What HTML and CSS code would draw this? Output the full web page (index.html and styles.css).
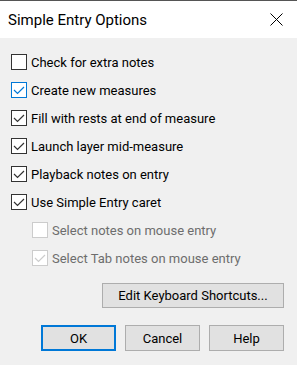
FILE: index.html
```html
<!DOCTYPE html>
<html lang="en">
<head>
  <meta charset="UTF-8" />
  <title>Simple Entry Options</title>
  <link rel="stylesheet" href="styles.css">
</head>
<body>
  <div class="dialog">
    <!-- Title bar -->
    <div class="titlebar">
      <span class="title">Simple Entry Options</span>
      <svg class="close" width="13" height="13" viewBox="0 0 13 13">
        <path d="M0.5 0.5 L12.5 12.5 M12.5 0.5 L0.5 12.5" stroke="#000" stroke-width="1" fill="none"/>
      </svg>
    </div>

    <div class="content">
      <div class="options">
        <label class="row">
          <span class="box"></span>
          <span class="label">Check for extra notes</span>
        </label>
        <label class="row focused">
          <span class="box checked"><svg viewBox="0 0 16 16"><polyline points="3,8 6.5,11.5 13,5"/></svg></span>
          <span class="label">Create new measures</span>
        </label>
        <label class="row">
          <span class="box checked"><svg viewBox="0 0 16 16"><polyline points="3,8 6.5,11.5 13,5"/></svg></span>
          <span class="label">Fill with rests at end of measure</span>
        </label>
        <label class="row">
          <span class="box checked"><svg viewBox="0 0 16 16"><polyline points="3,8 6.5,11.5 13,5"/></svg></span>
          <span class="label">Launch layer mid-measure</span>
        </label>
        <label class="row">
          <span class="box checked"><svg viewBox="0 0 16 16"><polyline points="3,8 6.5,11.5 13,5"/></svg></span>
          <span class="label">Playback notes on entry</span>
        </label>
        <label class="row">
          <span class="box checked"><svg viewBox="0 0 16 16"><polyline points="3,8 6.5,11.5 13,5"/></svg></span>
          <span class="label">Use Simple Entry caret</span>
        </label>
        <label class="row sub disabled">
          <span class="box"></span>
          <span class="label">Select notes on mouse entry</span>
        </label>
        <label class="row sub disabled">
          <span class="box checked"><svg viewBox="0 0 16 16"><polyline points="3,8 6.5,11.5 13,5"/></svg></span>
          <span class="label">Select Tab notes on mouse entry</span>
        </label>
      </div>

      <div class="shortcuts">
        <button class="btn wide">Edit Keyboard Shortcuts...</button>
      </div>

      <div class="actions">
        <button class="btn default">OK</button>
        <button class="btn">Cancel</button>
        <button class="btn">Help</button>
      </div>
    </div>
  </div>
</body>
</html>
```

FILE: styles.css
```css
body {
  margin: 0;
  background: #f0f0f0;
  font-family: Roboto, "Liberation Sans", sans-serif;
  color: #000;
}

.dialog {
  width: 297px;
  height: 365px;
  overflow: hidden;
}

/* Title bar */
.titlebar {
  height: 37px;
  border-top: 1px solid #555555;
  background: #ffffff;
  display: flex;
  align-items: center;
  padding: 0 14px 0 8px;
}

.title {
  flex: 1;
  font-size: 15px;
  color: #000;
}

.close {
  display: block;
}

/* Options */
.content {
  padding: 10px 13px 0 11px;
}

.row {
  height: 28px;
  display: flex;
  align-items: center;
}

.row.sub {
  padding-left: 21px;
}

.box {
  width: 14px;
  height: 14px;
  border: 1px solid #333333;
  background: #ffffff;
  margin-right: 4px;
  flex: none;
}

.box svg {
  display: block;
  width: 16px;
  height: 16px;
  margin: -1px;
}

.box polyline {
  fill: none;
  stroke: #333333;
  stroke-width: 1.2;
}

.label {
  font-size: 13px;
  white-space: nowrap;
}

.focused .box {
  border-color: #0078d7;
}

.focused .box polyline {
  stroke: #0078d7;
}

.disabled .box {
  border-color: #cccccc;
}

.disabled .box polyline {
  stroke: #cccccc;
}

.disabled .label {
  color: #6d6d6d;
}

/* Buttons */
.shortcuts {
  display: flex;
  justify-content: flex-end;
  margin-top: 11px;
}

.actions {
  display: flex;
  justify-content: flex-end;
  gap: 9px;
  margin-top: 17px;
}

.btn {
  width: 75px;
  height: 26px;
  border: 1px solid #adadad;
  background: #e1e1e1;
  font-family: inherit;
  font-size: 13px;
  color: #000;
  padding: 0;
}

.btn.wide {
  width: 182px;
  height: 25px;
}

.btn.default {
  border: 2px solid #0078d7;
}
```
